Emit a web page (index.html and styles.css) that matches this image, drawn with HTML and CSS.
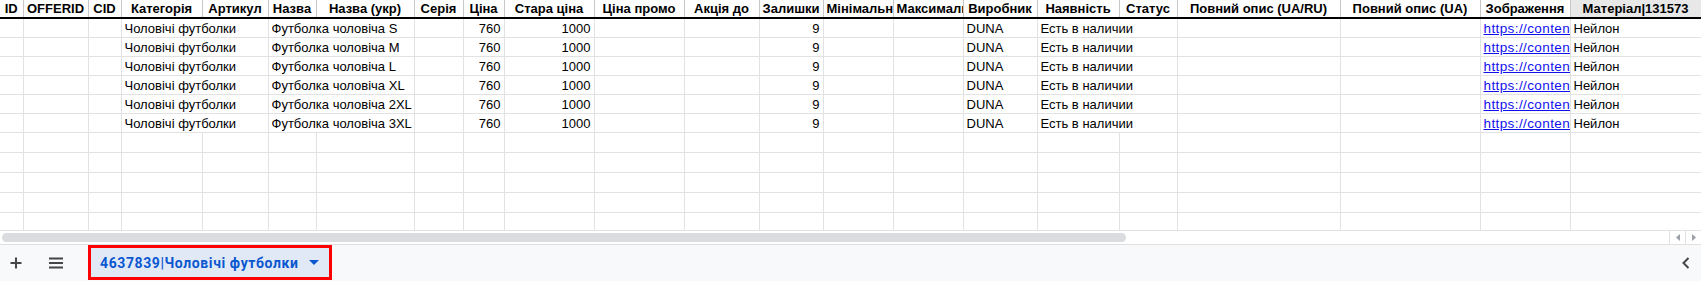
FILE: index.html
```html
<!DOCTYPE html>
<html lang="uk">
<head>
    <meta charset="UTF-8">
    <meta name="viewport" content="width=device-width, initial-scale=1.0">
    <title>Чоловічі футболки</title>
    <link rel="stylesheet" href="styles.css">
</head>
<body>
    <div class="sheet">
        <div class="grid">
            <table class="cells">
                <colgroup>
                    <col style="width:23px"><col style="width:65px"><col style="width:33px"><col style="width:81px">
                    <col style="width:66px"><col style="width:48px"><col style="width:98px"><col style="width:49px">
                    <col style="width:41px"><col style="width:90px"><col style="width:90px"><col style="width:75px">
                    <col style="width:64px"><col style="width:70px"><col style="width:70px"><col style="width:74px">
                    <col style="width:82px"><col style="width:58px"><col style="width:163px"><col style="width:140px">
                    <col style="width:90px"><col style="width:131px">
                </colgroup>
                <thead>
                    <tr>
                        <th>ID</th>
                        <th>OFFERID</th>
                        <th>CID</th>
                        <th>Категорія</th>
                        <th>Артикул</th>
                        <th>Назва</th>
                        <th>Назва (укр)</th>
                        <th>Серія</th>
                        <th>Ціна</th>
                        <th>Стара ціна</th>
                        <th>Ціна промо</th>
                        <th>Акція до</th>
                        <th>Залишки</th>
                        <th class="clip">Мінімальна кількість</th>
                        <th class="clip">Максимальна кількість</th>
                        <th>Виробник</th>
                        <th>Наявність</th>
                        <th>Статус</th>
                        <th>Повний опис (UA/RU)</th>
                        <th>Повний опис (UA)</th>
                        <th>Зображення</th>
                        <th class="selected">Матеріал|131573</th>
                    </tr>
                </thead>
                <tbody id="rows"></tbody>
            </table>
        </div>

        <div class="hscroll">
            <div class="thumb"></div>
            <div class="scroll-arrows">
                <span class="scroll-btn">
                    <svg width="6" height="7" viewBox="0 0 6 7"><path d="M5 0 L1 3.5 L5 7 Z" fill="#9aa0a6"/></svg>
                </span>
                <span class="scroll-btn">
                    <svg width="6" height="7" viewBox="0 0 6 7"><path d="M1 0 L5 3.5 L1 7 Z" fill="#9aa0a6"/></svg>
                </span>
            </div>
        </div>

        <div class="tabbar">
            <button class="bar-btn" title="Додати аркуш">
                <svg width="14" height="14" viewBox="0 0 14 14"><path d="M7 1.5 V12.5 M1.5 7 H12.5" stroke="#444746" stroke-width="2"/></svg>
            </button>
            <button class="bar-btn" title="Усі аркуші">
                <svg width="16" height="12" viewBox="0 0 16 12"><path d="M1 1.5 H15 M1 6 H15 M1 10.5 H15" stroke="#444746" stroke-width="1.8"/></svg>
            </button>
            <div class="sheet-tab">
                <span class="tab-name">4637839|Чоловічі футболки</span>
                <svg class="tab-caret" width="10" height="5" viewBox="0 0 10 5"><path d="M0 0 H10 L5 5 Z" fill="#0b57d0"/></svg>
            </div>
            <button class="bar-btn collapse" title="Згорнути">
                <svg width="10" height="14" viewBox="0 0 10 14"><path d="M7.5 2 L2.5 7 L7.5 12" stroke="#444746" stroke-width="2" fill="none"/></svg>
            </button>
        </div>
    </div>

    <script>
        const sizes = ['S', 'M', 'L', 'XL', '2XL', '3XL'];
        const body = document.getElementById('rows');

        function cell(text, cls, span) {
            const td = document.createElement('td');
            if (cls) td.className = cls;
            if (span) td.colSpan = span;
            if (text !== undefined) td.textContent = text;
            return td;
        }

        sizes.forEach(function (size) {
            const tr = document.createElement('tr');
            tr.className = 'filled';
            tr.append(
                cell(''), cell(''), cell(''),
                cell('Чоловічі футболки', '', 2),
                cell('Футболка чоловіча ' + size, '', 2),
                cell(''),
                cell('760', 'num'),
                cell('1000', 'num'),
                cell(''), cell(''),
                cell('9', 'num'),
                cell(''), cell(''),
                cell('DUNA'),
                cell('Есть в наличии', '', 2),
                cell(''), cell('')
            );
            const img = cell('', 'link');
            const link = document.createElement('a');
            link.href = '#';
            link.textContent = 'https://content.rozetka.com.ua/goods/images/original/duna.jpg';
            img.appendChild(link);
            tr.append(img, cell('Нейлон'));
            body.appendChild(tr);
        });

        for (let i = 0; i < 5; i++) {
            const tr = document.createElement('tr');
            tr.className = 'empty';
            for (let c = 0; c < 22; c++) tr.appendChild(cell(''));
            body.appendChild(tr);
        }
    </script>
</body>
</html>
```

FILE: styles.css
```css
body {
    margin: 0;
    background: #FFFFFF;
    font-family: "Liberation Sans", Arial, sans-serif;
    color: #000000;
}

.sheet {
    width: 1701px;
    height: 281px;
    overflow: hidden;
}

.grid {
    height: 230px;
    overflow: hidden;
}

.cells {
    border-collapse: collapse;
    table-layout: fixed;
    width: 1701px;
}

.cells th,
.cells td {
    border: 1px solid #E2E2E2;
    padding: 0 3px 1px 3px;
    white-space: nowrap;
    overflow: hidden;
    font-size: 13px;
    line-height: 15px;
    vertical-align: bottom;
    text-align: left;
}

.cells tr > :first-child {
    border-left: none;
}

.cells th {
    height: 16px;
    border-top: none;
    border-left-color: #C7C7C7;
    border-right-color: #C7C7C7;
    border-bottom: 2px solid #000000;
    font-weight: bold;
    text-align: center;
}

.cells th.clip {
    text-align: left;
    text-overflow: clip;
}

.cells th.selected {
    background: #E8E8E8;
}

.cells tr.filled td {
    height: 17px;
}

.cells tr.empty td {
    height: 18px;
}

.cells td.num {
    text-align: right;
}

.cells td.link {
    font-size: 13.5px;
    letter-spacing: 0.4px;
}

.cells td a {
    color: #1111EE;
    text-decoration: underline;
}

.hscroll {
    height: 13px;
    border-top: 1px solid #E2E2E2;
    display: flex;
    align-items: center;
    background: #FFFFFF;
}

.thumb {
    width: 1124px;
    height: 9px;
    margin-left: 2px;
    border-radius: 5px;
    background: #DADCE0;
}

.scroll-arrows {
    margin-left: auto;
    display: flex;
    height: 100%;
}

.scroll-btn {
    width: 15px;
    display: flex;
    align-items: center;
    justify-content: center;
    border-left: 1px solid #E2E2E2;
}

.tabbar {
    height: 36px;
    border-top: 1px solid #E0E0E0;
    background: #F8F9FA;
    display: flex;
    align-items: flex-start;
}

.bar-btn {
    width: 32px;
    height: 36px;
    border: none;
    background: transparent;
    padding: 0;
    display: flex;
    align-items: center;
    justify-content: center;
    cursor: pointer;
}

.bar-btn + .bar-btn {
    width: 48px;
}

.sheet-tab {
    margin-left: 8px;
    width: 229px;
    height: 29px;
    border: 3px solid #FF0000;
    background: #E1E9F7;
    display: flex;
    align-items: center;
    padding-left: 9px;
    box-sizing: content-box;
}

.tab-name {
    font-family: Roboto, "Liberation Sans", sans-serif;
    font-size: 14px;
    font-weight: bold;
    color: #0B57D0;
    letter-spacing: 0.6px;
}

.tab-caret {
    margin-left: 10px;
}

.collapse {
    margin-left: auto;
    width: 30px;
}
```
